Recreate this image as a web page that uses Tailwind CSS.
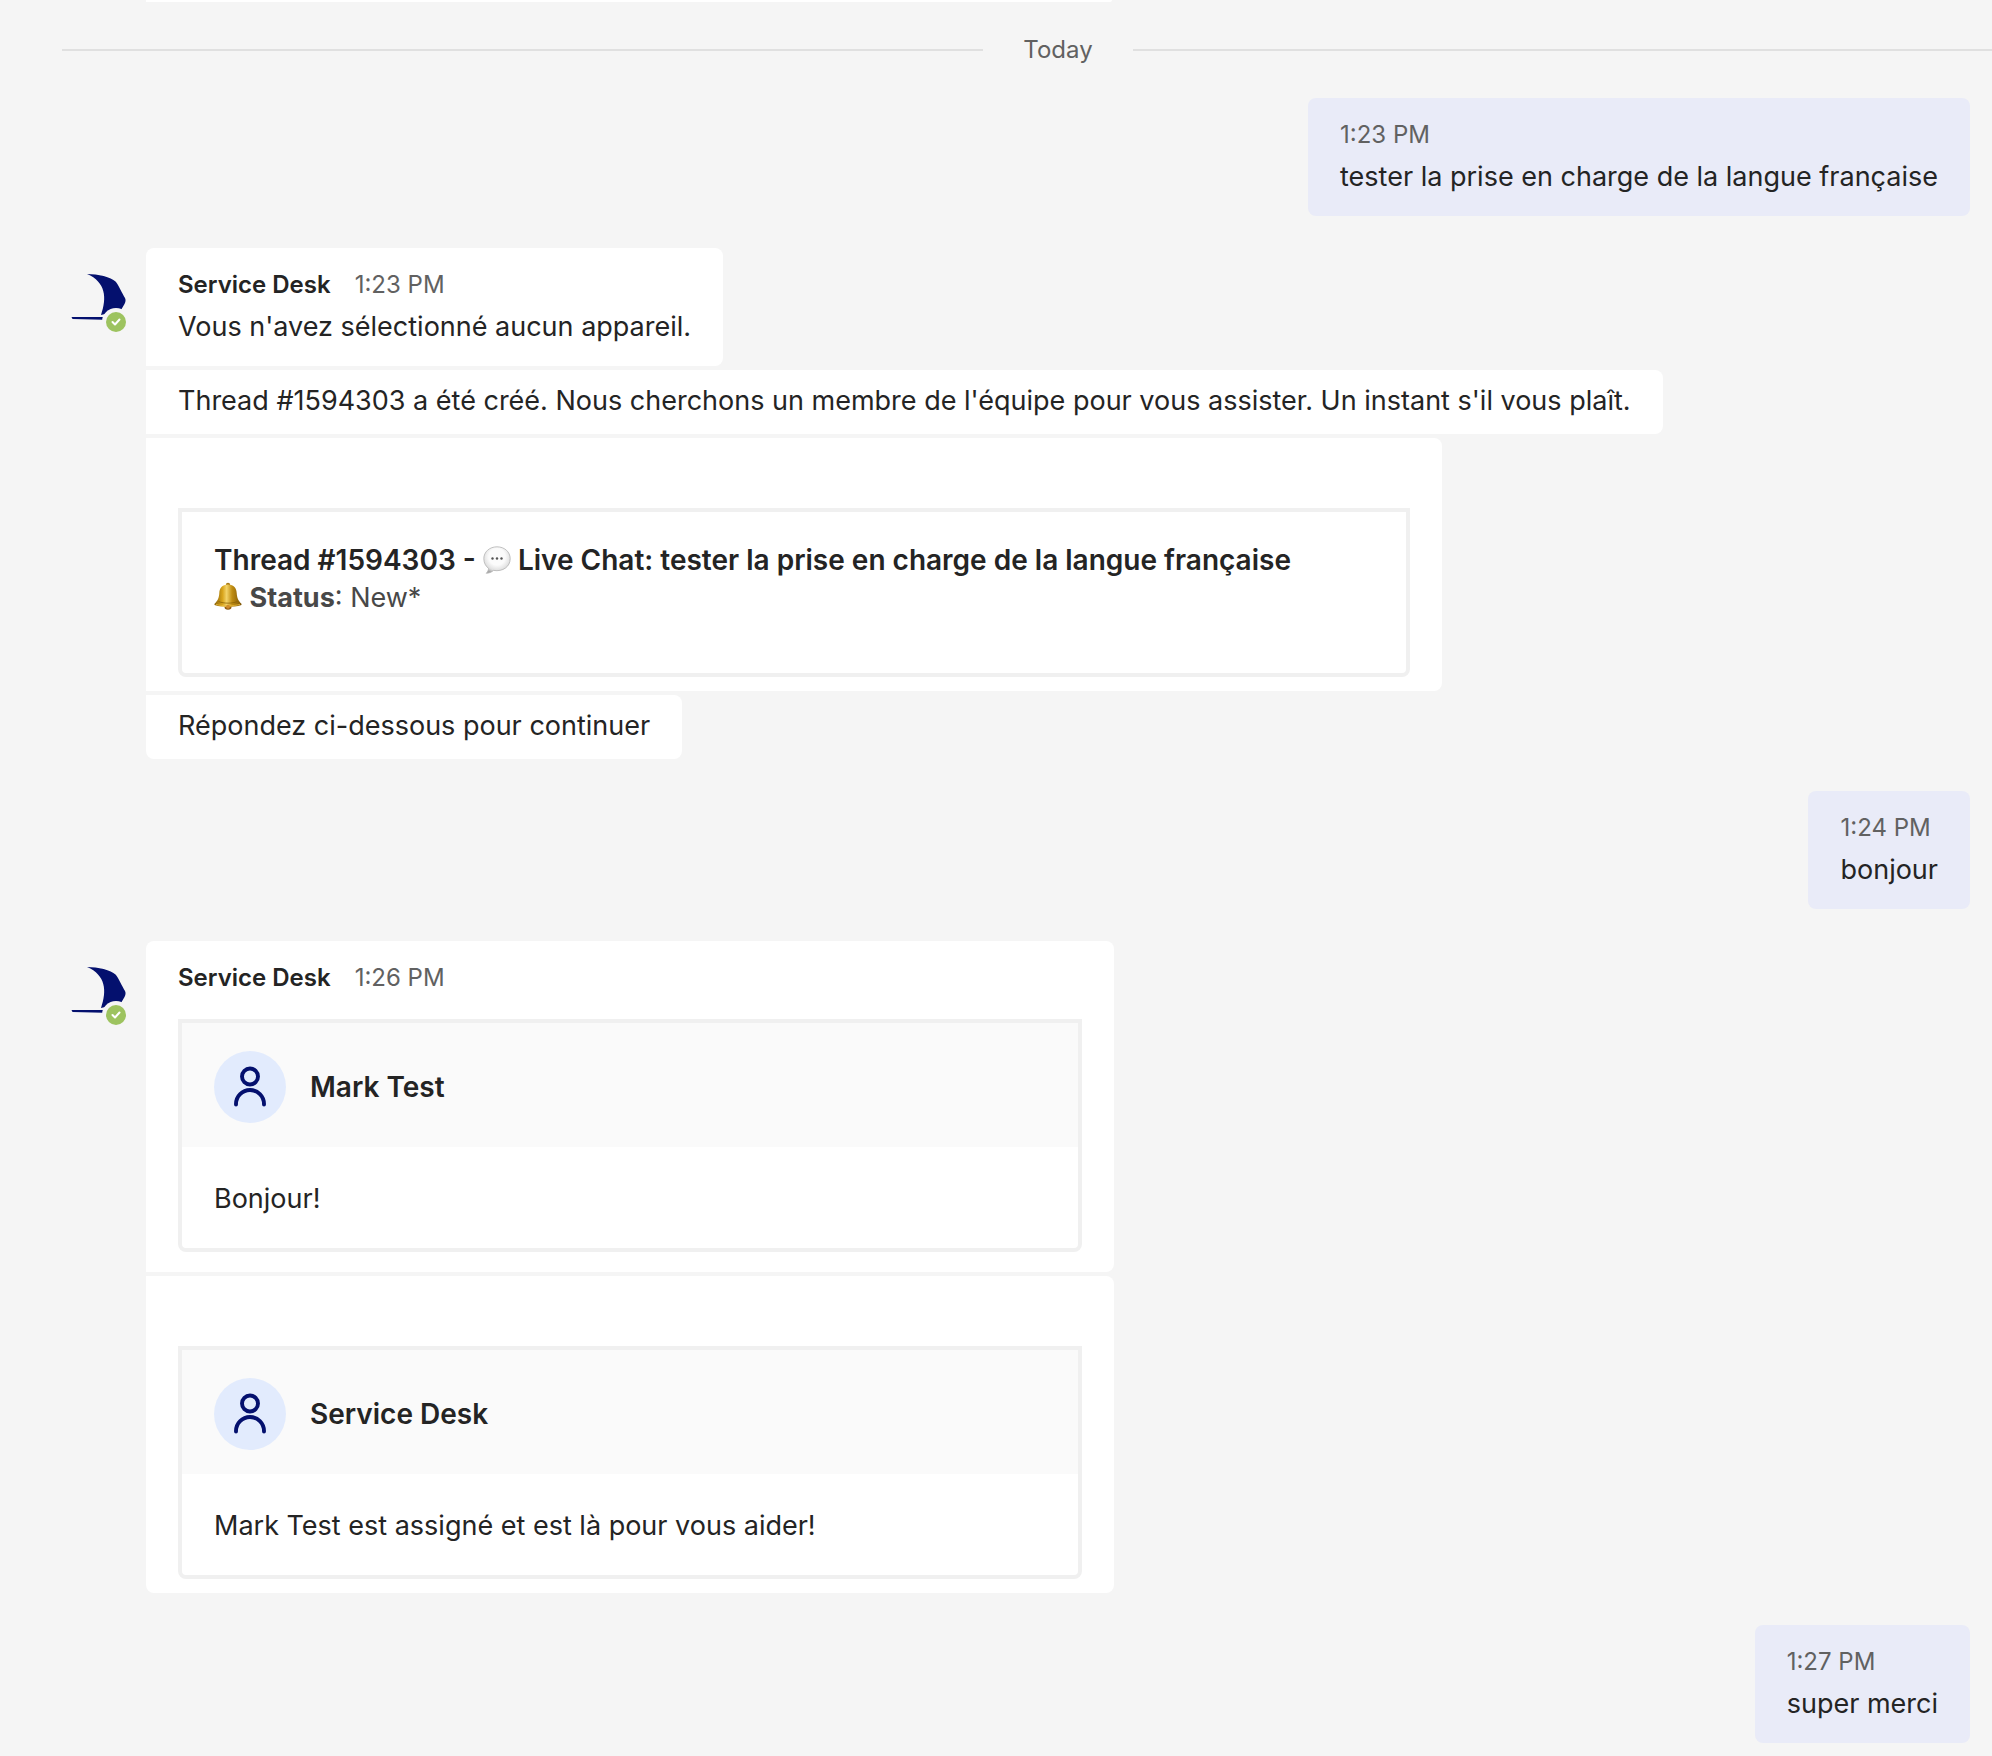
<!DOCTYPE html>
<html lang="fr">
  <head>
    <meta charset="utf-8" />
    <meta name="viewport" content="width=device-width, initial-scale=1" />
    <title>Service Desk</title>
    <script src="https://cdn.jsdelivr.net/npm/@tailwindcss/browser@4"></script>
  </head>

  <body class="bg-[#f5f5f5] font-[Inter,sans-serif] text-[27px] leading-[50px] text-[#242424]">
    <!-- icons used more than once -->
    <svg class="hidden">
      <symbol id="sail" viewBox="0 0 64 64">
        <path d="M21 4C32 4 45 7 49.500 11.500C52 14 56.500 24 59 28C60 30 59.500 32 58.500 34L55 40L35 45C41 28 40 12 21 4Z" fill="#04106e" />
        <path d="M5.500 47H37V49.700L6.500 49Z" fill="#04106e" />
        <circle cx="50" cy="52" r="14" fill="#f5f5f5" />
        <circle cx="50" cy="52" r="10" fill="#9dc35f" />
        <path d="M46.500 52L49 54.500L53.500 49.500" fill="none" stroke="#fff" stroke-width="2" stroke-linecap="round" stroke-linejoin="round" />
      </symbol>
      <symbol id="person" viewBox="0 0 72 72">
        <circle cx="36" cy="36" r="36" fill="#e2ebfd" />
        <g fill="none" stroke="#04106e" stroke-width="3.900" stroke-linecap="round">
          <circle cx="36" cy="25.500" r="8" />
          <path d="M22 53.500V53a14 14 0 0 1 28 0v.5" />
        </g>
      </symbol>
    </svg>

    <main class="overflow-x-hidden">
      <div class="ml-[146px] h-0.5 w-full max-w-[966px] rounded-br-lg bg-white"></div>

      <!-- the divider runs on past the right edge -->
      <div class="-mr-[62px] ml-[62px] flex h-24 items-center gap-10 text-2xl text-[#616161]">
        <hr class="w-full border-t-2 border-[#e0e0e0]" />
        <span>Today</span>
        <hr class="w-full border-t-2 border-[#e0e0e0]" />
      </div>

      <div class="flex flex-col gap-8 pb-3">
        <article class="mr-[22px] self-end rounded-lg bg-[#e9ebf8] px-8 pt-5 pb-3.5">
          <time class="block text-2xl leading-[34px] text-[#616161]">1:23 PM</time>
          <p>tester la prise en charge de la langue française</p>
        </article>

        <section class="flex items-start gap-4 pl-[66px]">
          <svg class="mt-[22px] size-16 shrink-0" role="img" aria-label="Service Desk"><use href="#sail" /></svg>
          <div class="flex grow flex-col items-start gap-1">
            <article class="rounded-lg rounded-bl-none bg-white px-8 pt-5 pb-3.5">
              <header class="flex gap-6 text-2xl leading-[34px]">
                <h2 class="font-semibold">Service Desk</h2>
                <time class="text-[#616161]">1:23 PM</time>
              </header>
              <p>Vous n'avez sélectionné aucun appareil.</p>
            </article>

            <article class="rounded-r-lg bg-white px-8 pt-1.5 pb-2">
              <p>Thread #1594303 a été créé. Nous cherchons un membre de l'équipe pour vous assister. Un instant s'il vous plaît.</p>
            </article>

            <article class="w-full max-w-[1296px] rounded-r-lg bg-white px-8 pt-[70px] pb-3.5">
              <div class="rounded-b-lg border-4 border-[#f0f0f0] px-8 pt-[29px] pb-14 leading-[38px]">
                <h3 class="text-[28px] leading-[38px] font-semibold">
                  Thread #1594303 -
                  <svg class="inline size-7 align-[-4px]" viewBox="0 0 28 28" role="img" aria-label="speech balloon">
                    <defs>
                      <radialGradient id="balloon" cx=".5" cy=".38" r=".62">
                        <stop offset=".5" stop-color="#fbfbfb" />
                        <stop offset=".82" stop-color="#e0e0e0" />
                        <stop offset="1" stop-color="#a8a8a8" />
                      </radialGradient>
                    </defs>
                    <path d="M14 .8C6.500 .8 .8 5.900 .8 12.700C.8 17 2.900 20.400 5.500 22.300C5.600 24.200 4.600 25.800 3.300 27.300C6.500 27.200 9 25.800 10.500 24.400C20 26 27.200 20.500 27.200 12.700C27.200 5.900 21.500 .8 14 .8Z" fill="url(#balloon)" stroke="#b4b4b4" stroke-width=".8" />
                    <g fill="#555">
                      <circle cx="9.500" cy="12.500" r="1.200" />
                      <circle cx="14" cy="12.500" r="1.200" />
                      <circle cx="18.500" cy="12.500" r="1.200" />
                    </g>
                  </svg>
                  Live Chat: tester la prise en charge de la langue française
                </h3>
                <p class="text-[#484848]">
                  <svg class="inline size-7 align-[-3px]" viewBox="0 0 28 28" role="img" aria-label="bell">
                    <defs>
                      <linearGradient id="brass">
                        <stop offset="0" stop-color="#8a6208" />
                        <stop offset=".3" stop-color="#d9a51c" />
                        <stop offset=".45" stop-color="#f3d368" />
                        <stop offset=".65" stop-color="#c08d12" />
                        <stop offset="1" stop-color="#7c5406" />
                      </linearGradient>
                    </defs>
                    <circle cx="14" cy="3" r="2.200" fill="#a87a14" />
                    <ellipse cx="14" cy="25" rx="3.500" ry="2.800" fill="#8f5a10" />
                    <path d="M14 2.500C8 2.500 5.500 6.500 5.300 11C5 16 3.800 18.500 .8 21.500C.2 22.200 .3 23 1.200 23.300C8 25.600 20 25.600 26.800 23.300C27.700 23 27.800 22.200 27.200 21.500C24.200 18.500 23 16 22.700 11C22.500 6.500 20 2.500 14 2.500Z" fill="url(#brass)" />
                    <path d="M4.500 19.500C10 21.700 18 21.700 23.500 19.500" fill="none" stroke="#8a6208" stroke-width=".8" />
                    <path d="M2 22.300C9 24.300 19 24.300 26 22.300" fill="none" stroke="#e8bb3e" stroke-width=".8" />
                    <circle cx="14" cy="24.700" r="2" fill="#cf8b2c" />
                  </svg>
                  <strong class="font-bold">Status</strong>: New*
                </p>
              </div>
            </article>

            <article class="rounded-lg rounded-tl-none bg-white px-8 pt-1.5 pb-2">
              <p>Répondez ci-dessous pour continuer</p>
            </article>
          </div>
        </section>

        <article class="mr-[22px] self-end rounded-lg bg-[#e9ebf8] px-8 pt-5 pb-3.5">
          <time class="block text-2xl leading-[34px] text-[#616161]">1:24 PM</time>
          <p>bonjour</p>
        </article>

        <section class="flex items-start gap-4 pl-[66px]">
          <svg class="mt-[22px] size-16 shrink-0" role="img" aria-label="Service Desk"><use href="#sail" /></svg>
          <div class="flex max-w-[968px] grow flex-col gap-1">
            <article class="rounded-lg rounded-bl-none bg-white px-8 pt-5 pb-5">
              <header class="mb-6 flex gap-6 text-2xl leading-[34px]">
                <h2 class="font-semibold">Service Desk</h2>
                <time class="text-[#616161]">1:26 PM</time>
              </header>
              <div class="rounded-b-lg border-4 border-[#f0f0f0] leading-[38px]">
                <div class="flex items-center gap-6 bg-[#fafafa] px-8 pt-7 pb-6">
                  <svg class="size-[72px]"><use href="#person" /></svg>
                  <h3 class="text-[28px] leading-[38px] font-semibold">Mark Test</h3>
                </div>
                <p class="px-8 pt-[33px] pb-[30px]">Bonjour!</p>
              </div>
            </article>

            <article class="rounded-lg rounded-tl-none bg-white px-8 pt-[70px] pb-3.5">
              <div class="rounded-b-lg border-4 border-[#f0f0f0] leading-[38px]">
                <div class="flex items-center gap-6 bg-[#fafafa] px-8 pt-7 pb-6">
                  <svg class="size-[72px]"><use href="#person" /></svg>
                  <h3 class="text-[28px] leading-[38px] font-semibold">Service Desk</h3>
                </div>
                <p class="px-8 pt-[33px] pb-[30px]">Mark Test est assigné et est là pour vous aider!</p>
              </div>
            </article>
          </div>
        </section>

        <article class="mr-[22px] self-end rounded-lg bg-[#e9ebf8] px-8 pt-5 pb-3.5">
          <time class="block text-2xl leading-[34px] text-[#616161]">1:27 PM</time>
          <p>super merci</p>
        </article>
      </div>
    </main>
  </body>
</html>
